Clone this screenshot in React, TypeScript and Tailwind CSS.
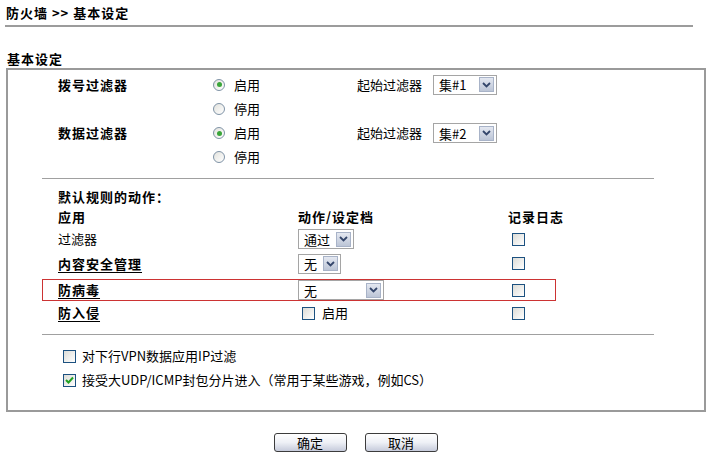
import React from 'react'

const font = { fontFamily: '"Noto Sans CJK SC", "Liberation Sans", sans-serif' }

function Arrow() {
  return (
    <span className="flex h-[15px] w-[15px] items-center justify-center border border-[#a8b3c8] bg-gradient-to-b from-[#e4e8f1] to-[#bcc5d6]">
      <svg width="9" height="6" viewBox="0 0 9 6">
        <path d="M1 1 L4.5 4.5 L8 1" fill="none" stroke="#34466b" strokeWidth="1.8" />
      </svg>
    </span>
  )
}

function Select({ value, className }: { value: string; className: string }) {
  return (
    <span
      className={`flex h-[20px] items-center justify-between border border-[#a5a5a5] bg-white pl-[5px] pr-[2px] text-[13px] leading-none ${className}`}
    >
      <span>{value}</span>
      <Arrow />
    </span>
  )
}

function Radio({ checked }: { checked?: boolean }) {
  return (
    <span className="flex h-[12px] w-[12px] items-center justify-center rounded-full border border-[#7f93a6] bg-gradient-to-br from-[#e2e2dd] to-white">
      {checked && <span className="h-[5px] w-[5px] rounded-full bg-[#3aa53a]" />}
    </span>
  )
}

function Check({ checked }: { checked?: boolean }) {
  return (
    <span className="flex h-[13px] w-[13px] shrink-0 items-center justify-center border border-[#1c5180] bg-gradient-to-br from-[#dcdcd7] to-white">
      {checked && (
        <svg width="9" height="8" viewBox="0 0 9 8">
          <path d="M1 4 L3.5 6.5 L8 1.5" fill="none" stroke="#21a121" strokeWidth="2" />
        </svg>
      )}
    </span>
  )
}

function Button({ label }: { label: string }) {
  return (
    <span className="flex h-[19px] w-[73px] items-center justify-center rounded-[3px] border border-[#3c3c3c] bg-gradient-to-b from-white via-[#eef0f6] to-[#c6cbdb] text-[13px] leading-none">
      {label}
    </span>
  )
}

const bold = 'font-bold tracking-[1px]'
const link = 'font-bold tracking-[1px] underline decoration-1 underline-offset-[3px]'

export default function App() {
  return (
    <div className="h-[457px] w-[711px] bg-white text-[13px] text-black" style={font}>
      <div className={`flex h-[25px] items-center pl-[6px] ${bold}`}>防火墙 &gt;&gt; 基本设定</div>
      <div className="ml-[5px] w-[688px] border-t-2 border-[#9c9c9c]" />

      <div className={`mt-[24px] flex h-[16px] items-center pl-[7px] ${bold}`}>基本设定</div>

      <div className="ml-[6px] mt-[1px] w-[700px] border-2 border-[#9a9a9a] pb-[18px] pt-[2px]">
        <div className="ml-[34px] w-[612px]">
          {/* filters */}
          <div className="flex h-[25px] items-center pl-4">
            <span className={`w-[155px] ${bold}`}>拨号过滤器</span>
            <span className="flex w-[144px] items-center gap-[9px]">
              <Radio checked />
              启用
            </span>
            <span className="w-[76px]">起始过滤器</span>
            <Select value="集#1" className="w-[64px]" />
          </div>
          <div className="flex h-6 items-center pl-4">
            <span className="w-[155px]" />
            <span className="flex items-center gap-[9px]">
              <Radio />
              停用
            </span>
          </div>
          <div className="flex h-6 items-center pl-4">
            <span className={`w-[155px] ${bold}`}>数据过滤器</span>
            <span className="flex w-[144px] items-center gap-[9px]">
              <Radio checked />
              启用
            </span>
            <span className="w-[76px]">起始过滤器</span>
            <Select value="集#2" className="w-[64px]" />
          </div>
          <div className="flex h-6 items-center pl-4">
            <span className="w-[155px]" />
            <span className="flex items-center gap-[9px]">
              <Radio />
              停用
            </span>
          </div>

          <div className="mt-[9px] border-t border-[#a0a0a0]" />

          {/* default actions */}
          <div className={`mt-[8px] flex h-5 items-center pl-4 ${bold}`}>默认规则的动作：</div>
          <div className={`flex h-5 items-center pl-4 ${bold}`}>
            <span className="w-[240px]">应用</span>
            <span className="w-[210px]">动作/设定档</span>
            <span>记录日志</span>
          </div>
          <div className="flex h-6 items-center pl-4">
            <span className="w-[240px]">过滤器</span>
            <span className="w-[214px]">
              <Select value="通过" className="w-[56px]" />
            </span>
            <Check />
          </div>
          <div className="flex h-[25px] items-center pl-4">
            <span className={`w-[240px] ${link}`}>内容安全管理</span>
            <span className="w-[214px]">
              <Select value="无" className="w-[43px]" />
            </span>
            <Check />
          </div>
          <div className="mt-[3px] flex h-[22px] w-[514px] items-center border border-[#cc3333] pl-[15px]">
            <span className={`w-[240px] ${link}`}>防病毒</span>
            <span className="w-[214px]">
              <Select value="无" className="w-[86px]" />
            </span>
            <Check />
          </div>
          <div className="flex h-6 items-center pl-4">
            <span className={`w-[240px] ${link}`}>防入侵</span>
            <span className="flex w-[214px] items-center gap-[7px] pl-[4px]">
              <Check />
              启用
            </span>
            <Check />
          </div>

          <div className="mt-[9px] border-t border-[#a0a0a0]" />

          <div className="mt-[9px] flex h-6 items-center gap-[6px] pl-[21px]">
            <Check />
            对下行VPN数据应用IP过滤
          </div>
          <div className="flex h-6 items-center gap-[6px] pl-[21px]">
            <Check checked />
            接受大UDP/ICMP封包分片进入（常用于某些游戏，例如CS）
          </div>
        </div>
      </div>

      <div className="mt-[21px] flex justify-center gap-[18px]">
        <Button label="确定" />
        <Button label="取消" />
      </div>
    </div>
  )
}
